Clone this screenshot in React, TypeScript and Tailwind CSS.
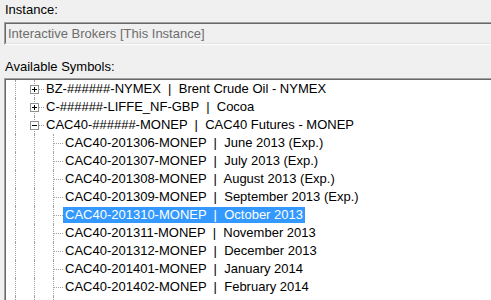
import React from 'react';

type Row = { level: 1 | 2; text: string; box?: '+' | '-'; selected?: boolean };

const rows: Row[] = [
  { level: 1, text: 'BZ-######-NYMEX  |  Brent Crude Oil - NYMEX', box: '+' },
  { level: 1, text: 'C-######-LIFFE_NF-GBP  |  Cocoa', box: '+' },
  { level: 1, text: 'CAC40-######-MONEP  |  CAC40 Futures - MONEP', box: '-' },
  { level: 2, text: 'CAC40-201306-MONEP  |  June 2013 (Exp.)' },
  { level: 2, text: 'CAC40-201307-MONEP  |  July 2013 (Exp.)' },
  { level: 2, text: 'CAC40-201308-MONEP  |  August 2013 (Exp.)' },
  { level: 2, text: 'CAC40-201309-MONEP  |  September 2013 (Exp.)' },
  { level: 2, text: 'CAC40-201310-MONEP  |  October 2013', selected: true },
  { level: 2, text: 'CAC40-201311-MONEP  |  November 2013' },
  { level: 2, text: 'CAC40-201312-MONEP  |  December 2013' },
  { level: 2, text: 'CAC40-201401-MONEP  |  January 2014' },
  { level: 2, text: 'CAC40-201402-MONEP  |  February 2014' },
];

// one 19px indent column, with the dotted connector drawn in it
const Indent: React.FC<{ vertical?: boolean; branch?: boolean; box?: '+' | '-' }> = ({ vertical, branch, box }) => (
  <div className="relative w-[19px] h-[18px] shrink-0">
    {vertical && <span className="absolute left-[9px] top-0 h-[18px] border-l border-dotted border-[#a0a0a0]" />}
    {branch && <span className="absolute left-[10px] top-[9px] w-[9px] border-t border-dotted border-[#a0a0a0]" />}
    {box && (
      <>
        <span className="absolute left-[14px] top-[9px] w-[5px] border-t border-dotted border-[#a0a0a0]" />
        <span className="absolute left-[5px] top-[5px] w-[9px] h-[9px] border border-[#919191] bg-white flex items-center justify-center">
          <span className="relative w-[5px] h-[5px]">
            <span className="absolute left-0 top-[2px] w-[5px] h-[1px] bg-black" />
            {box === '+' && <span className="absolute left-[2px] top-0 w-[1px] h-[5px] bg-black" />}
          </span>
        </span>
      </>
    )}
  </div>
);

const Sunken: React.FC<{ className?: string; innerClassName?: string; children: React.ReactNode }> = ({ className, innerClassName, children }) => (
  <div className={`border border-t-[#a0a0a0] border-l-[#a0a0a0] border-b-white border-r-white ${className ?? ''}`}>
    <div className={`h-full border border-t-[#696969] border-l-[#696969] border-b-[#e3e3e3] border-r-[#e3e3e3] ${innerClassName ?? ''}`}>
      {children}
    </div>
  </div>
);

export default function App() {
  return (
    <div className="w-[491px] h-[300px] overflow-hidden bg-[#f0f0f0] text-[13px] text-black font-['Liberation_Sans',Arial,sans-serif]">
      <div className="pl-[5px] pt-[2px] leading-[15px]">Instance:</div>

      <Sunken className="ml-[4px] mt-[5px] w-[600px] h-[23px]" innerClassName="bg-[#f0f0f0]">
        <div className="pl-[2px] leading-[19px] text-[#6d6d6d]">Interactive Brokers [This Instance]</div>
      </Sunken>

      <div className="pl-[5px] mt-[14px] leading-[15px]">Available Symbols:</div>

      <Sunken className="ml-[4px] mt-[4px] w-[600px] h-[240px]" innerClassName="bg-white">
        <div className="flex flex-col">
          {rows.map((r, i) => (
            <div key={i} className="flex h-[18px]">
              <Indent vertical />
              {r.level === 1 ? (
                <Indent vertical box={r.box} />
              ) : (
                <>
                  <Indent vertical />
                  <Indent vertical branch />
                </>
              )}
              <div
                className={`mt-[1px] h-[16px] leading-[16px] px-[2px] whitespace-pre ${
                  r.selected ? 'bg-[#3399ff] text-white' : ''
                }`}
              >
                {r.text}
              </div>
            </div>
          ))}
          <div className="flex h-[18px]">
            <Indent vertical />
            <Indent vertical />
            <Indent vertical />
          </div>
        </div>
      </Sunken>
    </div>
  );
}
